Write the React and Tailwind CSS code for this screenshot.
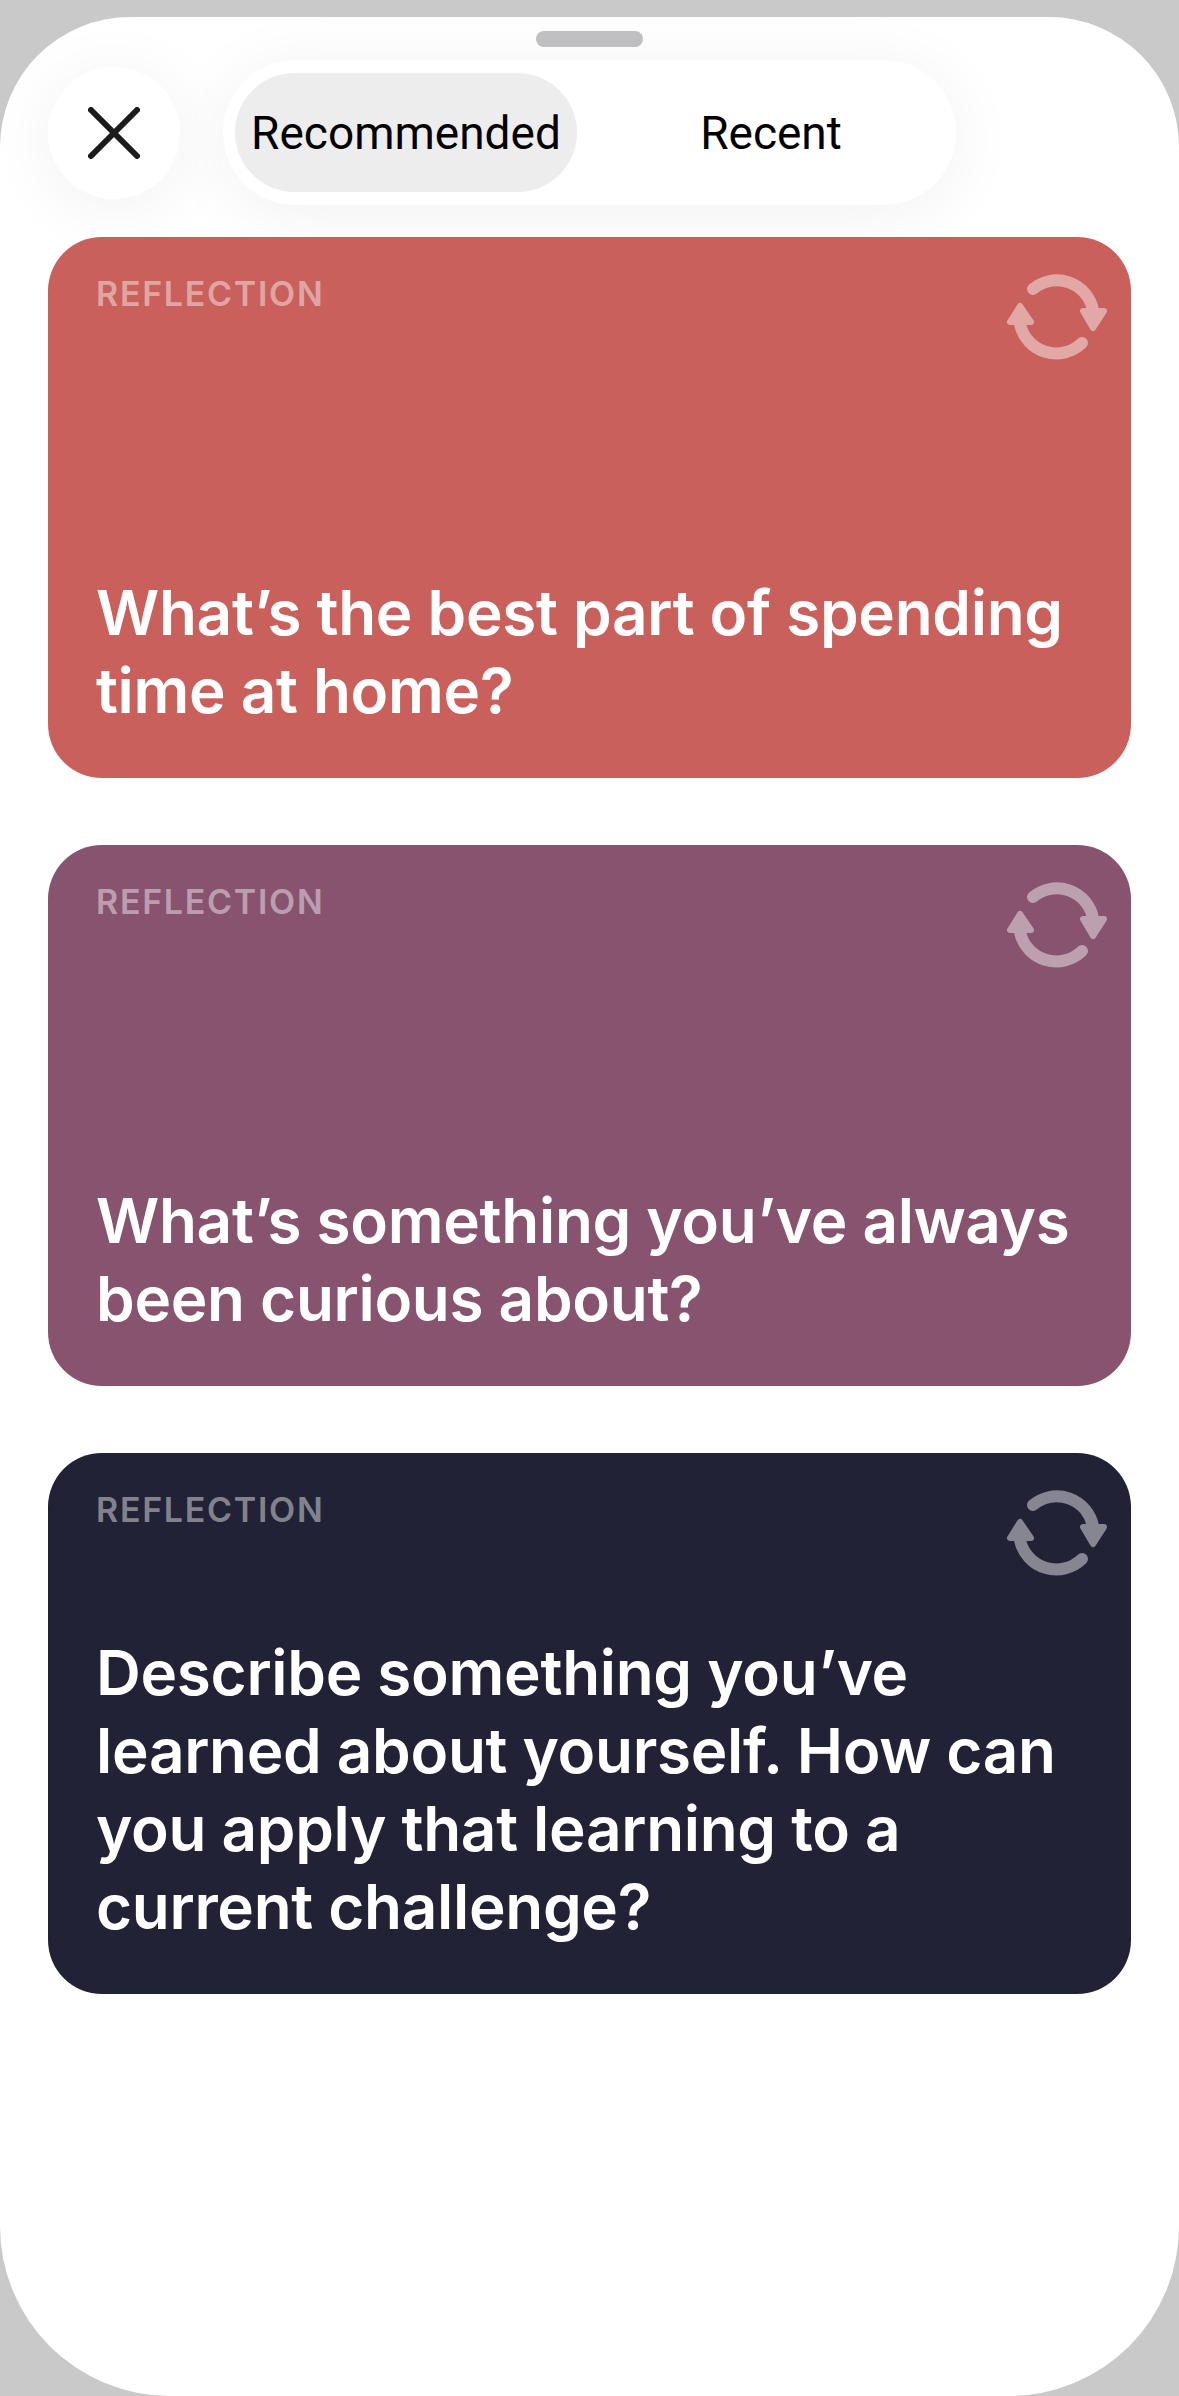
const prompts = [
    { id: 1, bg: 'bg-[#c9605c]', text: 'What’s the best part of spending time at home?' },
    { id: 2, bg: 'bg-[#87536f]', text: 'What’s something you’ve always been curious about?' },
    { id: 3, bg: 'bg-[#212236]', text: 'Describe something you’ve learned about yourself. How can you apply that learning to a current challenge?' },
];

const RefreshIcon = () => (
    <svg viewBox="0 0 102 90" className="w-[102px] h-[90px] opacity-45" fill="none" stroke="white" strokeLinecap="round" strokeLinejoin="round">
        <path d="M27 17 A37 37 0 0 1 87 38" strokeWidth="12" />
        <path d="M14 52 A37 37 0 0 0 76 71" strokeWidth="12" />
        <path d="M77 39 H98 L87 56 Z" fill="white" strokeWidth="6" />
        <path d="M14 34 L4 50 H25 Z" fill="white" strokeWidth="6" />
    </svg>
);

const PromptCard = ({ bg, text }) => (
    <div className={`h-[541px] rounded-[54px] flex flex-col justify-between pb-[48px] ${bg}`}>
        <div className="flex justify-between items-start pl-[48px] pr-[23px] pt-[35px]">
            <span className="text-[34px] leading-[44px] font-semibold tracking-[1.7px] text-white/45">REFLECTION</span>
            <RefreshIcon />
        </div>
        <p className="px-[48px] text-[62px] leading-[78px] font-semibold tracking-[-0.3px] text-white">{text}</p>
    </div>
);

export default function App() {
    return (
        <div className="h-[2396px] bg-[#c9c9c9] pt-[17px] font-['Inter',sans-serif]">
            <div className="h-[2379px] bg-white rounded-t-[130px] rounded-b-[170px] overflow-hidden">
                <div className="h-[220px]">
                    <div className="flex justify-center pt-[14px]">
                        <div className="w-[107px] h-[16px] rounded-full bg-[#c2c2c5]"></div>
                    </div>
                    <div className="flex items-center gap-[43px] pl-[48px] mt-[13px]">
                        <button className="w-[132px] h-[132px] rounded-full bg-white flex items-center justify-center shadow-[0_8px_70px_rgba(0,0,0,0.06)]">
                            <svg viewBox="0 0 52 52" className="w-[52px] h-[52px]" stroke="#1c1c1e" strokeWidth="6" strokeLinecap="round">
                                <path d="M3 3 L49 49 M49 3 L3 49" />
                            </svg>
                        </button>
                        <div className="w-[733px] h-[145px] rounded-[72px] bg-white flex items-center pl-[12px] shadow-[0_8px_70px_rgba(0,0,0,0.06)] font-['Roboto',sans-serif] text-[46px] text-black">
                            <div className="w-[342px] h-[119px] rounded-[60px] bg-[#ededed] flex items-center justify-center pt-[2px]">Recommended</div>
                            <div className="flex-1 text-center pl-[9px] pt-[2px]">Recent</div>
                        </div>
                    </div>
                </div>
                <div className="flex flex-col gap-[67px] pl-[48px] pr-[48px]">
                    {prompts.map(p => (
                        <PromptCard key={p.id} bg={p.bg} text={p.text} />
                    ))}
                </div>
            </div>
        </div>
    );
}
